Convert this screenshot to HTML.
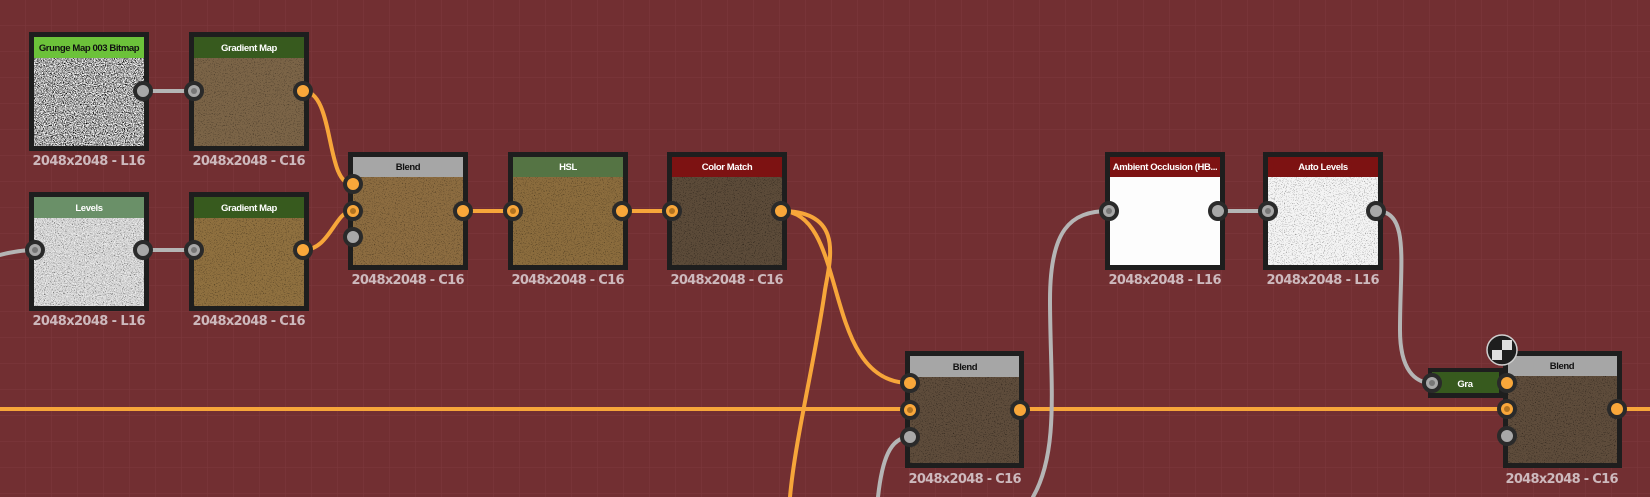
<!DOCTYPE html>
<html><head><meta charset="utf-8"><style>
html,body{margin:0;padding:0;background:#722f32;overflow:hidden}
svg{display:block}
.h{font-family:"Liberation Sans",sans-serif;font-size:9.5px;font-weight:bold;text-anchor:middle;letter-spacing:-0.4px}
.l{font-family:"DejaVu Sans","Liberation Sans",sans-serif;font-size:13px;font-weight:bold;fill:#cdb9bd;text-anchor:middle}
</style></head><body>
<svg width="1650" height="497" viewBox="0 0 1650 497" xmlns="http://www.w3.org/2000/svg">
<defs>
<pattern id="g" width="26" height="26" patternUnits="userSpaceOnUse">
<path d="M26 0V26M0 26H26" stroke="#7d3a3d" stroke-width="1" fill="none"/>
</pattern>
<filter id="nz" x="0" y="0" width="100%" height="100%">
<feTurbulence type="fractalNoise" baseFrequency="0.9" numOctaves="2" seed="3"/>
<feColorMatrix type="matrix" values="0 0 0 0 0  0 0 0 0 0  0 0 0 0 0  4 0 0 0 -1.6"/>
</filter>
<filter id="nzw" x="0" y="0" width="100%" height="100%">
<feTurbulence type="fractalNoise" baseFrequency="0.9" numOctaves="2" seed="7"/>
<feColorMatrix type="matrix" values="0 0 0 0 1  0 0 0 0 1  0 0 0 0 1  4 0 0 0 -1.6"/>
</filter>
<filter id="nzs" x="0" y="0" width="100%" height="100%">
<feTurbulence type="fractalNoise" baseFrequency="0.9" numOctaves="2" seed="5"/>
<feColorMatrix type="matrix" values="0 0 0 0 0  0 0 0 0 0  0 0 0 0 0  4 0 0 0 -2.3"/>
</filter>
</defs>
<rect width="1650" height="497" fill="#722f32"/>
<rect width="1650" height="497" fill="url(#g)"/>

<g fill="none" stroke-width="4" stroke-linecap="round">
<path d="M0 409H905M1024 409H1503M1622 409H1650" stroke="#f7a63a"/>
<path d="M0 255C15 251 25 250 35 250" stroke="#b5b5b5"/>
<path d="M148 91H193M148 250H193" stroke="#b5b5b5"/>
<path d="M303 91C335 91 325 184 352 184" stroke="#f7a63a"/>
<path d="M303 250C330 250 335 211 352 211" stroke="#f7a63a"/>
<path d="M463 211H512M622 211H671" stroke="#f7a63a"/>
<path d="M781 211C850 211 820 383 910 383" stroke="#f7a63a"/>
<path d="M781 211C845 211 830 260 825 290C815 360 795 440 790 497" stroke="#f7a63a"/>
<path d="M878 497C882 460 890 437 910 437" stroke="#b5b5b5"/>
<path d="M1033 497C1060 450 1050 380 1050 300C1050 230 1070 211 1109 211" stroke="#b5b5b5"/>
<path d="M1217 211H1268" stroke="#b5b5b5"/>
<path d="M1376 211C1410 211 1400 260 1400 330C1400 370 1415 383 1432 383" stroke="#b5b5b5"/>
</g>

<g>
<rect x="29" y="32" width="120" height="119" fill="#1e1e1e"/>
<rect x="34" y="37" width="110" height="21" fill="#6cc23a"/>
<rect x="34" y="58" width="110" height="88" fill="#a0a0a0"/>
<rect x="34" y="58" width="110" height="88" filter="url(#nz)"/>
<rect x="34" y="58" width="110" height="88" filter="url(#nzw)"/>
<text class="h" x="89" y="51" fill="#111">Grunge Map 003 Bitmap</text>
<text class="l" x="89" y="165" textLength="113">2048x2048 - L16</text>

<rect x="189" y="32" width="120" height="119" fill="#1e1e1e"/>
<rect x="194" y="37" width="110" height="21" fill="#375a1e"/>
<rect x="194" y="58" width="110" height="88" fill="#7b6447"/>
<rect x="194" y="58" width="110" height="88" filter="url(#nzs)" opacity=".5"/>
<text class="h" x="249" y="51" fill="#fff">Gradient Map</text>
<text class="l" x="249" y="165" textLength="113">2048x2048 - C16</text>

<rect x="29" y="192" width="120" height="119" fill="#1e1e1e"/>
<rect x="34" y="197" width="110" height="21" fill="#6a9068"/>
<rect x="34" y="218" width="110" height="88" fill="#c8c8c8"/>
<rect x="34" y="218" width="110" height="88" filter="url(#nzs)" opacity=".8"/>
<rect x="34" y="218" width="110" height="88" filter="url(#nzw)" opacity=".7"/>
<text class="h" x="89" y="211" fill="#fff">Levels</text>
<text class="l" x="89" y="325" textLength="113">2048x2048 - L16</text>

<rect x="189" y="192" width="120" height="119" fill="#1e1e1e"/>
<rect x="194" y="197" width="110" height="21" fill="#375a1e"/>
<rect x="194" y="218" width="110" height="88" fill="#8f703f"/>
<rect x="194" y="218" width="110" height="88" filter="url(#nzs)" opacity=".5"/>
<text class="h" x="249" y="211" fill="#fff">Gradient Map</text>
<text class="l" x="249" y="325" textLength="113">2048x2048 - C16</text>

<rect x="348" y="152" width="120" height="118" fill="#1e1e1e"/>
<rect x="353" y="157" width="110" height="20" fill="#a6a6a6"/>
<rect x="353" y="177" width="110" height="88" fill="#8c6c40"/>
<rect x="353" y="177" width="110" height="88" filter="url(#nzs)" opacity=".5"/>
<text class="h" x="408" y="170" fill="#111">Blend</text>
<text class="l" x="408" y="284" textLength="113">2048x2048 - C16</text>

<rect x="508" y="152" width="120" height="118" fill="#1e1e1e"/>
<rect x="513" y="157" width="110" height="20" fill="#557444"/>
<rect x="513" y="177" width="110" height="88" fill="#8b6c3d"/>
<rect x="513" y="177" width="110" height="88" filter="url(#nzs)" opacity=".5"/>
<text class="h" x="568" y="170" fill="#fff">HSL</text>
<text class="l" x="568" y="284" textLength="113">2048x2048 - C16</text>

<rect x="667" y="152" width="120" height="118" fill="#1e1e1e"/>
<rect x="672" y="157" width="110" height="20" fill="#7d1212"/>
<rect x="672" y="177" width="110" height="88" fill="#5c4b39"/>
<rect x="672" y="177" width="110" height="88" filter="url(#nzs)" opacity=".6"/>
<text class="h" x="727" y="170" fill="#fff">Color Match</text>
<text class="l" x="727" y="284" textLength="113">2048x2048 - C16</text>

<rect x="1105" y="152" width="120" height="118" fill="#1e1e1e"/>
<rect x="1110" y="157" width="110" height="20" fill="#7d1212"/>
<rect x="1110" y="177" width="110" height="88" fill="#fdfdfd"/>
<text class="h" x="1165" y="170" fill="#fff">Ambient Occlusion (HB...</text>
<text class="l" x="1165" y="284" textLength="113">2048x2048 - L16</text>

<rect x="1263" y="152" width="120" height="118" fill="#1e1e1e"/>
<rect x="1268" y="157" width="110" height="20" fill="#7d1212"/>
<rect x="1268" y="177" width="110" height="88" fill="#f4f4f4"/>
<rect x="1268" y="177" width="110" height="88" filter="url(#nzs)" opacity=".5"/>
<text class="h" x="1323" y="170" fill="#fff">Auto Levels</text>
<text class="l" x="1323" y="284" textLength="113">2048x2048 - L16</text>

<rect x="905" y="351" width="119" height="117" fill="#1e1e1e"/>
<rect x="910" y="356" width="109" height="21" fill="#a6a6a6"/>
<rect x="910" y="377" width="109" height="86" fill="#5e4c3b"/>
<rect x="910" y="377" width="109" height="86" filter="url(#nzs)" opacity=".6"/>
<text class="h" x="965" y="370" fill="#111">Blend</text>
<text class="l" x="965" y="483" textLength="113">2048x2048 - C16</text>

<rect x="1503" y="351" width="119" height="117" fill="#1e1e1e"/>
<rect x="1508" y="356" width="109" height="20" fill="#a6a6a6"/>
<rect x="1508" y="376" width="109" height="87" fill="#5e4c3b"/>
<rect x="1508" y="376" width="109" height="87" filter="url(#nzs)" opacity=".6"/>
<text class="h" x="1562" y="369" fill="#111">Blend</text>
<text class="l" x="1562" y="483" textLength="113">2048x2048 - C16</text>

<rect x="1428" y="368" width="75" height="30" fill="#1e1e1e"/>
<rect x="1432" y="372" width="67" height="21" fill="#375a1e"/>
<text class="h" x="1465" y="387" fill="#fff">Gra</text>
<circle cx="1502" cy="350" r="15" fill="#1e1e1e" stroke="#d0d0d0" stroke-width="1.5"/>
<rect x="1492" y="340" width="20" height="20" fill="#e0e0e0"/>
<rect x="1492" y="340" width="10" height="10" fill="#1e1e1e"/>
<rect x="1502" y="350" width="10" height="10" fill="#1e1e1e"/>
</g>

<g stroke="#2a2a2a" stroke-width="4">
<circle cx="143" cy="91" r="8" fill="#a8a8a8"/>
<circle cx="194" cy="91" r="8" fill="#a8a8a8"/>
<circle cx="303" cy="91" r="8" fill="#f9a73a"/>
<circle cx="35" cy="250" r="8" fill="#a8a8a8"/>
<circle cx="143" cy="250" r="8" fill="#a8a8a8"/>
<circle cx="194" cy="250" r="8" fill="#a8a8a8"/>
<circle cx="303" cy="250" r="8" fill="#f9a73a"/>
<circle cx="353" cy="184" r="8" fill="#f9a73a"/>
<circle cx="353" cy="211" r="8" fill="#f9a73a"/>
<circle cx="353" cy="237" r="8" fill="#a8a8a8"/>
<circle cx="463" cy="211" r="8" fill="#f9a73a"/>
<circle cx="513" cy="211" r="8" fill="#f9a73a"/>
<circle cx="622" cy="211" r="8" fill="#f9a73a"/>
<circle cx="672" cy="211" r="8" fill="#f9a73a"/>
<circle cx="781" cy="211" r="8" fill="#f9a73a"/>
<circle cx="1109" cy="211" r="8" fill="#a8a8a8"/>
<circle cx="1218" cy="211" r="8" fill="#a8a8a8"/>
<circle cx="1268" cy="211" r="8" fill="#a8a8a8"/>
<circle cx="1376" cy="211" r="8" fill="#a8a8a8"/>
<circle cx="910" cy="383" r="8" fill="#f9a73a"/>
<circle cx="910" cy="410" r="8" fill="#f9a73a"/>
<circle cx="910" cy="437" r="8" fill="#a8a8a8"/>
<circle cx="1020" cy="410" r="8" fill="#f9a73a"/>
<circle cx="1432" cy="383" r="8" fill="#a8a8a8"/>
<circle cx="1507" cy="383" r="8" fill="#f9a73a"/>
<circle cx="1507" cy="409" r="8" fill="#f9a73a"/>
<circle cx="1507" cy="436" r="8" fill="#a8a8a8"/>
<circle cx="1617" cy="409" r="8" fill="#f9a73a"/>
</g>
<g fill="#777">
<circle cx="194" cy="91" r="3"/><circle cx="35" cy="250" r="3"/><circle cx="194" cy="250" r="3"/>
<circle cx="1109" cy="211" r="3"/><circle cx="1268" cy="211" r="3"/><circle cx="1432" cy="383" r="3"/>
</g>
<g fill="#b27320">
<circle cx="353" cy="211" r="3"/><circle cx="513" cy="211" r="3"/><circle cx="672" cy="211" r="3"/>
<circle cx="910" cy="410" r="3"/><circle cx="1507" cy="409" r="3"/>
</g>
</svg>
</body></html>
